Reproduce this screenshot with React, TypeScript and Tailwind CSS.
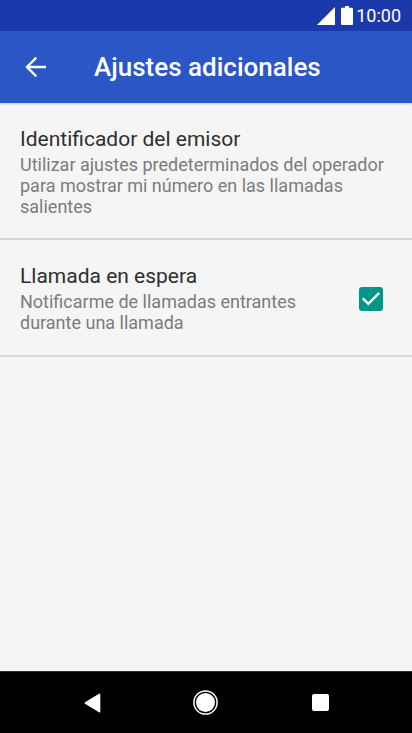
import { useState } from "react";

function StatusBar() {
  return (
    <div className="flex h-[31px] items-center justify-end bg-[#1c39ab] pr-[11px] text-white">
      <svg className="mr-[6px] h-[18px] w-[18px]" viewBox="0 0 18 18" fill="currentColor" aria-hidden="true">
        <path d="M18 0v18H0z" />
      </svg>
      <svg className="mr-[3px] h-[19px] w-[12px]" viewBox="0 0 12 19" fill="currentColor" aria-hidden="true">
        <path d="M4 0h4v1.700h3a1 1 0 0 1 1 1V18a1 1 0 0 1-1 1H1a1 1 0 0 1-1-1V2.700a1 1 0 0 1 1-1h3z" />
      </svg>
      <span className="text-lg leading-6">10:00</span>
    </div>
  );
}

function Header() {
  return (
    <header className="z-10 flex h-[72px] items-center bg-[#2a56c6] text-white shadow-[0_1px_2px_rgba(0,0,0,0.2)]">
      <button type="button" aria-label="Atrás" className="flex h-full w-[72px] items-center justify-center">
        <svg className="h-[22px] w-[22px]" viewBox="0 0 22 22" fill="none" stroke="currentColor" strokeWidth="2.400" aria-hidden="true">
          <path d="M21 11H2.500M11.300 1.700L2 11l9.300 9.300" />
        </svg>
      </button>
      <h1 className="ml-[22px] text-[26px] leading-8 font-medium">Ajustes adicionales</h1>
    </header>
  );
}

function NavBar() {
  const button = "flex h-full w-[114px] items-center justify-center";
  return (
    <nav className="flex h-[62px] justify-center border-t border-[#2c2f2e] bg-black text-white">
      <button type="button" aria-label="Volver" className={button}>
        <svg className="h-[20px] w-[17px]" viewBox="0 0 17 20" fill="currentColor" aria-hidden="true">
          <path d="M15 .8L1 9.300q-1 .7 0 1.400l14 8.500q1.300.6 1.300-.7v-17Q16.300.2 15 .8z" />
        </svg>
      </button>
      <button type="button" aria-label="Inicio" className={button}>
        <svg className="h-[26px] w-[26px]" viewBox="0 0 26 26" aria-hidden="true">
          <circle cx="12.500" cy="12.500" r="11.600" fill="none" stroke="currentColor" strokeWidth="1.500" />
          <circle cx="12.500" cy="12.500" r="9.500" fill="currentColor" />
        </svg>
      </button>
      <button type="button" aria-label="Aplicaciones recientes" className={button}>
        <span className="h-[17px] w-[17px] rounded-[2px] bg-white" />
      </button>
    </nav>
  );
}

export default function App() {
  const [waiting, setWaiting] = useState(true);

  return (
    <div className="flex min-h-screen flex-col bg-[#f5f5f5] font-['Roboto',sans-serif]">
      <StatusBar />
      <Header />
      <main className="flex-1">
        <button type="button" className="block w-full border-b-2 border-[#d8d8d8] px-5 pt-6 pb-[21px] text-left">
          <span className="block text-[21px] leading-6 text-[#2f2f2f]">Identificador del emisor</span>
          <span className="mt-[3px] block text-lg leading-[21px] text-[#7c7c7c]">
            Utilizar ajustes predeterminados del operador para mostrar mi número en las llamadas salientes
          </span>
        </button>
        <label className="flex items-center border-b-2 border-[#d8d8d8] pt-6 pr-[29px] pb-[22px] pl-5">
          <span className="flex-1 pr-12">
            <span className="block text-[21px] leading-6 text-[#2f2f2f]">Llamada en espera</span>
            <span className="mt-[3px] block text-lg leading-[21px] text-[#7c7c7c]">
              Notificarme de llamadas entrantes durante una llamada
            </span>
          </span>
          <span className="grid h-6 w-6 place-items-center">
            <input
              type="checkbox"
              checked={waiting}
              onChange={(e) => setWaiting(e.target.checked)}
              className="peer col-start-1 row-start-1 h-6 w-6 appearance-none rounded-[3px] border-2 border-[#757575] checked:border-[#009688] checked:bg-[#009688]"
            />
            <svg
              className="pointer-events-none col-start-1 row-start-1 hidden h-6 w-6 text-white peer-checked:block"
              viewBox="0 0 24 24"
              fill="none"
              stroke="currentColor"
              strokeWidth="2.400"
              aria-hidden="true"
            >
              <path d="M3.800 11.300l5.500 5.500L20.300 5.800" />
            </svg>
          </span>
        </label>
      </main>
      <NavBar />
    </div>
  );
}
